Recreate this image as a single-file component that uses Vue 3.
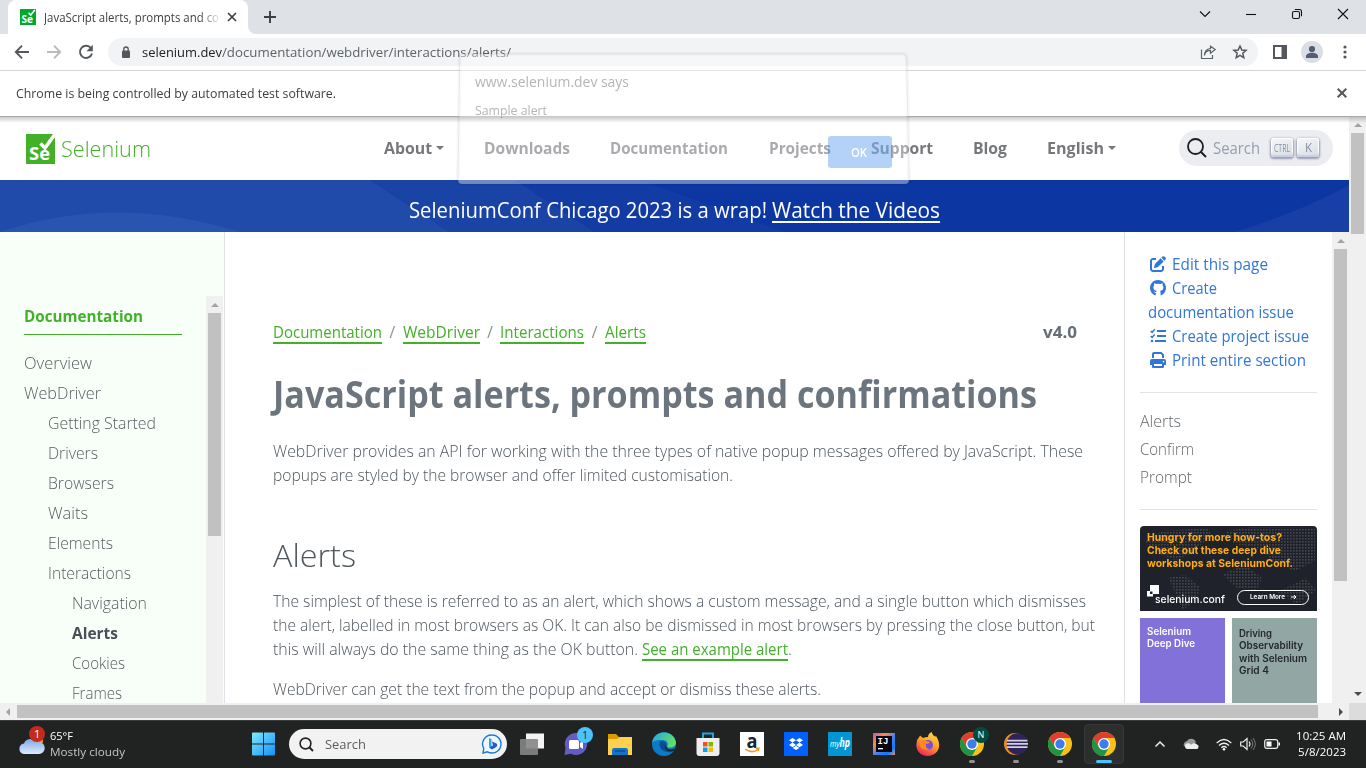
<script setup>
// Condenses a single line of text horizontally to a given width in pixels.
const vFit = {
  mounted(el, { value }) {
    const natural = el.getBoundingClientRect().width
    el.style.width = value + 'px'
    el.style.transform = `scaleX(${value / natural})`
  }
}

const nav = [
  { t: 'About', w: 48, caret: true },
  { t: 'Downloads', w: 86 },
  { t: 'Documentation', w: 118 },
  { t: 'Projects', w: 62 },
  { t: 'Support', w: 62 },
  { t: 'Blog', w: 34 },
  { t: 'English', w: 57, caret: true }
]
const side = [
  { t: 'Overview', w: 68, l: 0 },
  { t: 'WebDriver', w: 77, l: 0 },
  { t: 'Getting Started', w: 108, l: 1 },
  { t: 'Drivers', w: 50, l: 1 },
  { t: 'Browsers', w: 66, l: 1 },
  { t: 'Waits', w: 40, l: 1 },
  { t: 'Elements', w: 65, l: 1 },
  { t: 'Interactions', w: 83, l: 1 },
  { t: 'Navigation', w: 75, l: 2 },
  { t: 'Alerts', w: 46, l: 2, on: true },
  { t: 'Cookies', w: 53, l: 2 },
  { t: 'Frames', w: 50, l: 2 }
]
const crumbs = [
  { t: 'Documentation', w: 109 },
  { t: 'WebDriver', w: 77 },
  { t: 'Interactions', w: 84 },
  { t: 'Alerts', w: 41 }
]
const toc = [
  { t: 'Alerts', w: 41 },
  { t: 'Confirm', w: 54 },
  { t: 'Prompt', w: 52 }
]
</script>

<template>
  <div class="screen">
    <div class="tabstrip">
      <div class="tab">
        <svg width="16" height="16" viewBox="0 0 16 16"><rect width="16" height="16" fill="#00a82d"/><text x="1.500" y="14" font-size="10.500" font-weight="700" textLength="11.500" lengthAdjust="spacingAndGlyphs" fill="#fff">Se</text><path d="M8.500 3.700 10.700 6 15 .8" stroke="#fff" stroke-width="1.600" fill="none"/></svg>
        <div class="tabtitle"><span v-fit="175" class="fit">JavaScript alerts, prompts and co</span></div>
        <svg class="tabx" width="10" height="10" viewBox="0 0 10 10"><path d="M1 1l8 8M9 1l-8 8" stroke="#3c4043" stroke-width="1.700"/></svg>
      </div>
      <svg class="curve" width="8" height="8"><path d="M0 0A8 8 0 0 0 8 8H0z" fill="#fff"/></svg>
      <svg class="plus" width="12" height="12"><path d="M6 0v12M0 6h12" stroke="#3c4043" stroke-width="1.900"/></svg>
      <div class="wincontrols">
        <svg width="12" height="12" viewBox="0 0 12 12"><path d="M1 3.500l5 5 5-5"/></svg>
        <svg width="12" height="12" viewBox="0 0 12 12"><path d="M1 6.500h10"/></svg>
        <svg width="12" height="12" viewBox="0 0 12 12"><rect x="1.500" y="3.500" width="7" height="7" rx="1.500"/><path d="M3.800 1.500h4.700a2 2 0 0 1 2 2v4.700"/></svg>
        <svg width="12" height="12" viewBox="0 0 12 12"><path d="M1 1l10 10M11 1L1 11"/></svg>
      </div>
    </div>

    <div class="toolbar">
      <svg width="16" height="16" viewBox="0 0 16 16" class="ti"><path d="M15 8H2.500M8 1.700 1.800 8 8 14.300" stroke="#54575b" stroke-width="1.900" fill="none"/></svg>
      <svg width="16" height="16" viewBox="0 0 16 16" class="ti"><path d="M1 8h12.500M8 1.700 14.200 8 8 14.300" stroke="#b8babc" stroke-width="1.900" fill="none"/></svg>
      <svg width="16" height="16" viewBox="0 0 16 16" class="ti"><path d="M13 4.200A6.100 6.100 0 1 0 14 9.500" stroke="#54575b" stroke-width="1.900" fill="none"/><path d="M14.800.8v6.400H8.400z" fill="#54575b"/></svg>
      <div class="omnibox">
        <svg width="10" height="13" viewBox="0 0 10 13" class="lock"><rect x="1" y="4.500" width="8" height="7.500" rx="1" fill="#54575b"/><path d="M2.800 5V3.200a2.200 2.200 0 0 1 4.400 0V5" stroke="#54575b" stroke-width="1.300" fill="none"/></svg>
        <span v-fit="80" class="fit host">selenium.dev</span><span v-fit="289" class="fit path">/documentation/webdriver/interactions/alerts/</span>
        <svg class="share" width="17" height="15" viewBox="0 0 17 15"><path d="M1.500 4.500v9h11V10M4.500 10.500C4.800 7 7 5.600 10.500 5.400V8.200L15.200 4.500 10.500 1.200V3.500C6.500 4 4.500 6.500 4.500 10.500z" stroke="#5f6368" stroke-width="1.200" fill="none"/></svg>
        <svg class="star" width="16" height="16" viewBox="0 0 16 16"><path d="M8 2l1.800 4 4.300.4-3.300 2.900 1 4.300L8 11.300l-3.800 2.300 1-4.300L1.900 6.400 6.200 6z" stroke="#54575b" stroke-width="1.500" fill="none"/></svg>
      </div>
      <svg class="panel" width="14" height="14"><rect x="1" y="1" width="12" height="12" fill="none" stroke="#54575b" stroke-width="2"/><path d="M8.500 1H14v12H8.500z" fill="#54575b"/></svg>
      <svg class="avatar" width="22" height="22"><circle cx="11" cy="11" r="11" fill="#dadde4"/><circle cx="11" cy="8" r="3.100" fill="#515d73"/><path d="M5 17v-1.600c0-5 12-5 12 0V17z" fill="#515d73"/></svg>
      <svg class="dots" width="4" height="14"><circle cx="2" cy="2" r="1.600"/><circle cx="2" cy="7" r="1.600"/><circle cx="2" cy="12" r="1.600"/></svg>
    </div>

    <div class="infobar">
      <span v-fit="320" class="fit">Chrome is being controlled by automated test software.</span>
      <svg width="10" height="10" viewBox="0 0 10 10"><path d="M.7.7l8.600 8.600M9.300.7.7 9.300" stroke="#54575b" stroke-width="2"/></svg>
    </div>

    <div class="viewport">
      <div class="page">
        <header class="nav">
          <div class="brand">
            <svg width="30" height="30" viewBox="0 0 30 30"><path d="M0 0h26.500L29 4v26H0z" fill="#43b02a"/><path d="M14.500 9.500 19 14 28 1.500" stroke="#fff" stroke-width="3.500" fill="none"/><text x="3" y="26" font-size="18" font-weight="700" textLength="21" lengthAdjust="spacingAndGlyphs" fill="#fff">Se</text></svg>
            <span v-fit="90" class="fit">Selenium</span>
          </div>
          <nav>
            <a v-for="n in nav" :key="n.t"><span v-fit="n.w" class="fit">{{ n.t }}</span><i v-if="n.caret" class="caret"></i></a>
          </nav>
          <div class="search">
            <svg width="20" height="20" viewBox="0 0 20 20"><circle cx="8.500" cy="8.500" r="7.500" fill="none" stroke="#1c1e21" stroke-width="1.800"/><path d="M14 14l5 5" stroke="#1c1e21" stroke-width="1.900"/></svg>
            <span v-fit="47" class="fit">Search</span>
            <kbd><span v-fit="16" class="fit ctrl">CTRL</span></kbd><kbd><span v-fit="7" class="fit">K</span></kbd>
          </div>
        </header>
        <div class="banner">
          <svg class="waves" width="1349" height="52"><path d="M0 0H370L450 52H0z" fill="#204baa"/><path d="M370 0H515L595 52H450z" fill="#1944a5"/><path d="M515 0H640L785 52H595z" fill="#123ba3"/><path d="M0 52Q115 13 240 52z" fill="#2954b0"/><path d="M1235 52Q1300 32 1349 5V52z" fill="#173fa6"/></svg>
          <span v-fit="358" class="fit">SeleniumConf Chicago 2023 is a wrap!</span>
          <a><span v-fit="168" class="fit">Watch the Videos</span></a>
        </div>
        <div class="cols">
          <aside class="left">
            <div class="sidelist">
              <div class="sidehead"><span v-fit="119" class="fit">Documentation</span></div>
              <div v-for="s in side" :key="s.t" class="sideitem" :class="['l' + s.l, { on: s.on }]"><span v-fit="s.w" class="fit">{{ s.t }}</span></div>
            </div>
            <div class="vbar sidebar-scroll"><i class="up"></i><b></b></div>
          </aside>
          <main>
            <div class="crumbrow">
              <template v-for="(c, i) in crumbs" :key="c.t"><em v-if="i">/</em><a><span v-fit="c.w" class="fit">{{ c.t }}</span></a></template>
              <strong><span v-fit="34" class="fit">v4.0</span></strong>
            </div>
            <h1><span v-fit="764" class="fit">JavaScript alerts, prompts and confirmations</span></h1>
            <p><span v-fit="810" class="fit">WebDriver provides an API for working with the three types of native popup messages offered by JavaScript. These</span><br><span v-fit="460" class="fit">popups are styled by the browser and offer limited customisation.</span></p>
            <h2><span v-fit="83" class="fit">Alerts</span></h2>
            <p class="second"><span v-fit="813" class="fit">The simplest of these is referred to as an alert, which shows a custom message, and a single button which dismisses</span><br><span v-fit="822" class="fit">the alert, labelled in most browsers as OK. It can also be dismissed in most browsers by pressing the close button, but</span><br><span v-fit="365" class="fit">this will always do the same thing as the OK button.</span><a class="example"><span v-fit="146" class="fit">See an example alert</span></a>.</p>
            <p class="third"><span v-fit="548" class="fit">WebDriver can get the text from the popup and accept or dismiss these alerts.</span></p>
          </main>
          <aside class="right">
            <div class="meta">
              <div><svg viewBox="0 0 512 512"><path d="M471.600 21.700c-21.900-21.900-57.300-21.900-79.200 0L362.300 51.700l97.900 97.900 30.100-30.100c21.900-21.900 21.900-57.300 0-79.200L471.600 21.700zm-299.200 220c-6.100 6.100-10.800 13.600-13.500 21.900l-29.600 88.800c-2.900 8.600-.6 18.100 5.800 24.600s15.900 8.700 24.600 5.800l88.800-29.600c8.200-2.700 15.700-7.400 21.900-13.500L437.700 172.300 339.700 74.300 172.400 241.700zM96 64C43 64 0 107 0 160V416c0 53 43 96 96 96H352c53 0 96-43 96-96V320h-64v96c0 17.700-14.300 32-32 32H96c-17.700 0-32-14.300-32-32V160c0-17.700 14.300-32 32-32h96V64H96z"/></svg><span v-fit="96" class="fit">Edit this page</span></div>
              <div><svg viewBox="0 0 16 16"><path d="M5.400 15.500A8 8 0 1 1 10.600 15.500V12.500c0-.7-.2-1.300-.6-1.600 2-.3 3.400-1.100 3.400-3.600 0-.9-.3-1.600-.8-2.100.1-.3.300-1.100-.1-2 0 0-.7-.2-2.200.8a7 7 0 0 0-3.800 0C5 3 4.300 3.200 4.300 3.200c-.4.9-.2 1.700-.1 2-.5.500-.8 1.200-.8 2.100 0 2.500 1.500 3.300 3.400 3.600-.3.200-.5.600-.5 1.100-1.800.6-2-.9-2.600-1.200 .2.500.7 2.700 2.600 2.400z"/></svg><span v-fit="45" class="fit">Create</span></div>
              <div><span v-fit="146" class="fit">documentation issue</span></div>
              <div><svg viewBox="0 0 16 16"><path d="M.7 3l1.400 1.400L4.700 1.300M.7 8l1.400 1.400 2.600-3" fill="none" stroke="#3176d9" stroke-width="1.500"/><path d="M7 2h9v2H7zM7 7h9v2H7zM5 12h11v2H5z"/><circle cx="2" cy="13" r="1.300"/></svg><span v-fit="137" class="fit">Create project issue</span></div>
              <div><svg viewBox="0 0 16 16"><path d="M2 6V2a2 2 0 0 1 2-2h7.500L14 2.500V6h-2V3.300L10.700 2H4v4z"/><path fill-rule="evenodd" d="M2 7h12a2 2 0 0 1 2 2v3.500a.5.500 0 0 1-.5.500H14v2a1 1 0 0 1-1 1H3a1 1 0 0 1-1-1v-2H.5a.5.500 0 0 1-.5-.5V9a2 2 0 0 1 2-2zM4 12v2h8v-2zM13.500 8.700a.8.800 0 1 0 .01 0z"/></svg><span v-fit="134" class="fit">Print entire section</span></div>
            </div>
            <hr>
            <div class="toc"><div v-for="t in toc" :key="t.t"><span v-fit="t.w" class="fit">{{ t.t }}</span></div></div>
            <hr class="hr2">
            <div class="ad">
              <svg class="map" width="177" height="85"><defs><pattern id="dot" width="3" height="3" patternUnits="userSpaceOnUse"><rect width="1.600" height="1.600" fill="#44474e"/></pattern></defs><path d="M5 16 22 5 68 2 72 10 60 19 49 29 35 34 16 27zM28 52 45 49 60 61 56 73 43 84 36 68zM86 5 112 1 175 2 175 35 155 45 136 37 124 26 108 20 94 18zM82 48 105 39 122 52 117 64 97 62zM137 66 166 52 176 65 157 78z" fill="url(#dot)"/></svg>
              <div class="adtext"><span v-fit="135" class="fit">Hungry for more how-tos?</span><br><span v-fit="134" class="fit">Check out these deep dive</span><br><span v-fit="146" class="fit">workshops at SeleniumConf.</span></div>
              <div class="adfoot"><svg width="14" height="14"><path d="M3 0h9v9H3z" fill="#fff"/><path d="M0 6h6v5.500H0z" fill="#fff"/><path d="M3 6.500h2.500V9H3z" fill="#1c1e26"/></svg><span v-fit="70" class="fit conf">selenium.conf</span><div class="learn"><span v-fit="35" class="fit">Learn More</span><svg width="6" height="6"><path d="M0 3h5M3 1l2 2-2 2" stroke="#fff" fill="none"/></svg></div></div>
            </div>
            <div class="cards">
              <div class="purple"><span v-fit="44" class="fit">Selenium</span><br><span v-fit="48" class="fit">Deep Dive</span></div>
              <div class="teal"><span v-fit="33" class="fit">Driving</span><br><span v-fit="64" class="fit">Observability</span><br><span v-fit="68" class="fit">with Selenium</span><br><span v-fit="30" class="fit">Grid 4</span></div>
            </div>
          </aside>
          <div class="vbar inner-scroll"><i class="up"></i><b></b></div>
        </div>
      </div>
      <div class="vbar outer-scroll"><i class="up"></i><b></b><i class="down"></i></div>
      <div class="hbar"><i class="lf"></i><b></b><i class="rt"></i></div>
      <div class="corner"></div>
    </div>

    <div class="taskbar">
      <div class="weather">
        <svg width="30" height="32" viewBox="0 0 30 32"><defs><linearGradient id="cl" x2="0" y2="1"><stop stop-color="#7fa8e8"/><stop offset="1" stop-color="#dcecff"/></linearGradient></defs><circle cx="20" cy="15" r="5" fill="#f6a02a"/><path d="M6 28a5.300 5.300 0 0 1 0-10.500 7 7 0 0 1 12.500-1A6 6 0 1 1 20 28z" fill="url(#cl)"/><circle cx="19" cy="8" r="8" fill="#c42b1c"/><text x="16" y="12" font-size="11" fill="#fff">1</text></svg>
        <div><span v-fit="23" class="fit">65°F</span><br><span v-fit="75" class="fit cloudy">Mostly cloudy</span></div>
      </div>
      <svg class="start" width="24" height="24"><defs><linearGradient id="w" x2="1" y2="1"><stop stop-color="#7eeaff"/><stop offset="1" stop-color="#1590f5"/></linearGradient></defs><path d="M0 1.500Q0 .5 1 .5H11V11.500H0zM12 .5h10q1 0 1 1v10H12zM0 12.500h11v11H1q-1 0-1-1zM12 12.500h11v10q0 1-1 1H12z" fill="url(#w)"/></svg>
      <div class="tsearch">
        <svg width="15" height="15"><circle cx="6.500" cy="6.500" r="5.400" fill="none" stroke="#222" stroke-width="1.600"/><path d="M10.500 10.500 14 14" stroke="#222" stroke-width="1.900"/></svg>
        <span v-fit="41" class="fit">Search</span>
        <svg class="bing" width="20" height="20"><path d="M10 1a9 9 0 1 1-4.500 16.800L1 19l.8-4.500A9 9 0 0 1 10 1z" fill="#eef6ff" stroke="#1878d0" stroke-width="1.400"/><path d="M7 4l2.500 1v9L7 12.500z" fill="#2ba8e8"/><path d="M10 7.500l4.500 2q2 2-1 4L10 15.500 7 13.500l4-2z" fill="#2459ce"/></svg>
      </div>
      <div class="apps">
        <div><svg viewBox="0 0 24 24"><path d="M6 1.500h18v15H6z" fill="#f4f4f4"/><rect x="0" y="7" width="18" height="16" rx="1" fill="#858585" opacity=".9"/></svg></div>
        <div><svg viewBox="0 0 24 24"><path d="M12 1a11 11 0 1 1-5 20.700L.5 23 1.500 16A11 11 0 0 1 12 1z" fill="#625cc5"/><rect x="5" y="8" width="10" height="9" rx="1.500" fill="#fff"/><path d="M16 11l3-2v8l-3-2z" fill="#fff"/></svg><span class="badge">1</span></div>
        <div><svg viewBox="0 0 24 24"><path d="M0 2h8l3 3h13v8H0z" fill="#d99a05"/><path d="M0 7h9l3-2h12v18H0z" fill="#ffd04d"/><path d="M4 23v-5q0-2 2-2h12q2 0 2 2v5z" fill="#1173c9"/><path d="M7 18h10v2H7z" fill="#0d569a"/></svg></div>
        <div><svg viewBox="0 0 24 24"><defs><linearGradient id="e1" x1="0" x2="1" y2=".3"><stop stop-color="#20a6e7"/><stop offset="1" stop-color="#61df67"/></linearGradient></defs><circle cx="12" cy="12" r="12" fill="#0b7ac7"/><path d="M.2 10.500C2-3 22-3 24 10.500c0 4.500-5 6-9 4.500 2-3 .5-7-4.500-7C5 7.500 1 9 .2 10.500z" fill="url(#e1)"/><path d="M8 9.500C5.500 15 11 21.500 20 20q1-.5 1.500-1.500C16 19 11 17 14.500 13 14 10 11 8 8 9.500z" fill="#0c4b91"/><path d="M14.500 14.500c0 3 5 4 9 1.500l-1 2.500c-5 2-10 0-9.500-5z" fill="#202222"/></svg></div>
        <div><svg viewBox="0 0 24 24"><path d="M7 7V1.500h10V7" stroke="#1da6e5" stroke-width="2" fill="none"/><path d="M.5 6h23v15q0 3-3 3h-17q-3 0-3-3z" fill="#eee"/><path d="M7 10h4.500v4.500H7z" fill="#f25022"/><path d="M12.500 10H17v4.500h-4.500z" fill="#7fba00"/><path d="M7 15.500h4.500V20H7z" fill="#00a4ef"/><path d="M12.500 15.500H17V20h-4.500z" fill="#ffb900"/></svg></div>
        <div><svg viewBox="0 0 24 24"><path d="M0 0h24v24H0z" fill="#fff"/><text x="6.500" y="15.500" font-size="20" font-weight="700" textLength="11" lengthAdjust="spacingAndGlyphs" fill="#182334">a</text><path d="M5 17q7 5 13 .5M15.800 16.500l3-.3-.6 2.800" stroke="#f7981d" stroke-width="1.500" fill="none"/></svg></div>
        <div><svg viewBox="0 0 24 24"><path d="M0 0h24v24H0z" fill="#0061ff"/><path d="M8.500 6 12 8.300 8.500 10.600 5 8.300zM15.500 6 19 8.300l-3.500 2.300L12 8.300zM8.500 10.600 12 12.900l-3.500 2.300L5 12.900zM15.500 10.600l3.500 2.300-3.500 2.300L12 12.900zM12 13.700l3.400 2.200L12 18l-3.400-2.100z" fill="#fff"/></svg></div>
        <div><svg viewBox="0 0 24 24"><path d="M0 0h24v24H0z" fill="#0096d6"/><text x="2" y="14.500" font-size="8.500" font-style="italic" textLength="9.500" lengthAdjust="spacingAndGlyphs" fill="#fff">my</text><text x="11.500" y="15" font-size="12" font-style="italic" font-weight="700" textLength="10.500" lengthAdjust="spacingAndGlyphs" fill="#fff">hp</text></svg></div>
        <div><svg viewBox="0 0 24 24"><defs><linearGradient id="ij" x2="1" y2="1"><stop stop-color="#b857b4"/><stop offset=".3" stop-color="#fd8b4b"/><stop offset=".55" stop-color="#477ff5"/><stop offset=".8" stop-color="#087cfa"/><stop offset="1" stop-color="#ed8d78"/></linearGradient></defs><path d="M1 1h22v22H1z" fill="url(#ij)"/><path d="M4 4h16v16H4z" fill="#080410"/><text x="5.500" y="12" font-size="9" font-weight="700" class="mono" fill="#fff">IJ</text><path d="M6 16h5v1.300H6z" fill="#fff"/></svg></div>
        <div><svg viewBox="0 0 24 24"><defs><linearGradient id="ff" x1=".8" x2=".3" y2="1"><stop stop-color="#ffe141"/><stop offset=".5" stop-color="#ff9a28"/><stop offset="1" stop-color="#f0205d"/></linearGradient></defs><path d="M4 3.500 7 6q2-1 5-1Q12 2 15.500 0q1 3.500 4 5 0-1 .2-1.600C27 14 22 23 12 24 4 24-1 18 .7 10 1 7 3 6 4 3.500z" fill="url(#ff)"/><circle cx="12" cy="13" r="5" fill="#7a4edb"/><path d="M3 9q5-2 7 0l4 1q-1 2-4 2-1 5 4 5-6 3-10-3z" fill="#ff8a20"/></svg></div>
        <div><svg viewBox="0 0 24 24"><g id="chrome"><circle cx="12" cy="12" r="12" fill="#fbc116"/><path d="M12 12V6h10.400A12 12 0 0 0 1.600 6L6.800 15z" fill="#e33b2e"/><path d="M1.600 6A12 12 0 0 0 12 24l5.200-9L12 17.500 6.800 15z" fill="#229342"/><circle cx="12" cy="12" r="6" fill="#fff"/><circle cx="12" cy="12" r="4.700" fill="#3b7ded"/></g></svg><span class="badge n">N</span><u></u></div>
        <div><svg viewBox="0 0 24 24"><circle cx="11" cy="12" r="11" fill="#ee8b25"/><circle cx="13.300" cy="12" r="10.700" fill="#2e2459"/><path d="M3 7.800h20.500v1.800H3zM2.500 11H24v1.800H2.500zM3 14.200h20.500V16H3z" fill="#d4d0e2"/></svg><u></u></div>
        <div><svg viewBox="0 0 24 24"><use href="#chrome"/></svg><u></u></div>
        <div class="active"><svg viewBox="0 0 24 24"><use href="#chrome"/></svg><u></u></div>
      </div>
      <div class="tray">
        <svg width="12" height="8"><path d="M1.500 6.500 6 2l4.500 4.500" stroke="#eee" stroke-width="1.500" fill="none"/></svg>
        <svg width="17" height="12"><path d="M1 8.500A4 4 0 0 1 4 3a5 5 0 0 1 9 1.500z" fill="#999"/><path d="M4 11a3 3 0 0 1-.5-5.500Q6 4.500 8 6.500 11 3.500 14 6.500a2.400 2.400 0 0 1 0 4.500z" fill="#eee"/></svg>
        <svg width="16" height="13" viewBox="0 0 16 13"><path d="M.7 5q7.300-7 14.600 0M3 7.500q5-4.500 10 0M5.300 9.800q2.700-2.500 5.400 0" stroke="#eee" stroke-width="1.300" fill="none"/><circle cx="8" cy="11.300" r="1.300" fill="#fff"/></svg>
        <svg width="16" height="14" viewBox="0 0 16 14"><path d="M.7 5h2.500L7 1.500v11L3.200 9H.7zM9 4.500q2 2.500 0 5" stroke="#eee" stroke-width="1.200" fill="none"/><path d="M11 2.500q3.500 4.500 0 9M13 1q4.500 6 0 12" stroke="#777" fill="none"/></svg>
        <svg width="17" height="10"><rect x=".7" y=".7" width="13" height="8.600" rx="2" fill="none" stroke="#eee" stroke-width="1.200"/><path d="M2.500 2.500h5v5h-5zM14.500 3.500H16v3h-1.500z" fill="#fff"/></svg>
      </div>
      <div class="clock"><span v-fit="50" class="fit">10:25 AM</span><br><span v-fit="48" class="fit">5/8/2023</span></div>
    </div>

    <div class="alert">
      <svg class="sheet" width="461" height="140" viewBox="-5 -5 461 140"><path d="M5.500 0H444.500Q448.500 0 448.600 4L451 126Q451 130 447 130H4Q0 130 0 126L1.800 4Q1.800 0 5.500 0z" fill="none" stroke="#000" stroke-width="4" stroke-opacity=".03"/><path d="M5.500 0H444.500Q448.500 0 448.600 4L451 126Q451 130 447 130H4Q0 130 0 126L1.800 4Q1.800 0 5.500 0z" fill="#fff" fill-opacity=".38" stroke="#000" stroke-opacity=".06"/></svg>
      <div class="atitle"><span v-fit="154" class="fit">www.selenium.dev says</span></div>
      <div class="amsg"><span v-fit="72" class="fit">Sample alert</span></div>
      <button><span v-fit="16" class="fit">OK</span></button>
    </div>
  </div>
</template>

<style>
html, body { overflow: hidden; }
</style>

<style scoped>
* { box-sizing: border-box; }
.screen { position: relative; width: 1366px; height: 768px; display: flex; flex-direction: column; overflow: hidden; background: #fff; font-family: "Open Sans", "Noto Sans", sans-serif; color: #6c757d; }
.screen svg { display: block; flex: none; overflow: visible; }
.fit { display: inline-block; white-space: nowrap; transform-origin: 0 50%; }
.mono { font-family: "Liberation Mono", monospace; }

.tabstrip { height: 34px; flex: none; background: #dee1e6; display: flex; align-items: center; padding-left: 8px; }
.tab { width: 240px; height: 34px; background: #fff; border-radius: 8px 8px 0 0; display: flex; align-items: center; padding-left: 12px; font-size: 12px; color: #3c4043; }
.tabtitle { width: 175px; margin-left: 8px; -webkit-mask-image: linear-gradient(90deg, #000 155px, transparent 178px); }
.tabx { margin-left: 8px; }
.curve { align-self: flex-end; }
.plus { margin-left: 8px; }
.wincontrols { margin-left: auto; margin-right: 17px; margin-top: -6px; display: flex; gap: 34px; }
.wincontrols path, .wincontrols rect { fill: none; stroke: #111; stroke-width: 1.1; }
.toolbar { height: 37px; flex: none; display: flex; align-items: center; padding-left: 14px; border-bottom: 1px solid #d3d5d7; }
.ti { margin-right: 16px; }
.omnibox { width: 1150px; height: 28px; margin-left: -2px; border-radius: 14px; background: #f1f3f4; display: flex; align-items: center; font-size: 13.3px; padding-left: 13px; }
.lock { margin-right: 11px; }
.host { color: #202124; }
.path { color: #5f6368; }
.share { margin-left: auto; margin-right: 15px; }
.star { margin-right: 10px; }
.panel { margin-left: 15px; }
.avatar { margin-left: 14px; }
.dots { margin-left: 20px; fill: #54575b; }
.infobar { height: 45px; flex: none; padding: 0 19px 2px 16px; display: flex; align-items: center; justify-content: space-between; font-size: 13px; color: #3c4043; }

.viewport { height: 604px; flex: none; border-top: 1px solid #a7a9aa; display: grid; grid-template: 586px 17px / 1349px 17px; position: relative; }
.viewport::before { content: ""; position: absolute; left: 0; right: 0; top: 0; height: 6px; background: linear-gradient(#0003, #0000); z-index: 2; }
.page { overflow: hidden; display: flex; flex-direction: column; }
.nav { height: 63px; flex: none; display: flex; align-items: center; padding-bottom: 2px; }
.brand { width: 359px; padding-left: 26px; margin-right: -1px; display: flex; align-items: center; gap: 5px; color: #43b02a; font-size: 22px; font-weight: 300; padding-top: 2px; }
.brand .fit { margin-top: -1px; }
.nav nav { display: flex; gap: 40px; margin-left: 26px; font-size: 16px; font-weight: 700; color: #75777b; }
.nav nav a { display: flex; align-items: center; }
.nav nav a:nth-child(n+4) { position: relative; left: 1px; }
.caret { border: 4px solid transparent; border-top-color: currentColor; border-bottom: 0; margin-left: 4px; }
.search { margin-left: auto; margin-right: 16px; width: 154px; height: 36px; border-radius: 18px; background: #ebedf0; display: flex; align-items: center; padding-left: 8px; font-size: 16px; color: #969faf; }
.search > .fit { margin: 0 11px 0 6px; font-size: 16.5px; }
kbd { width: 22px; height: 19px; margin-right: 4px; border-radius: 3px; background: linear-gradient(-26deg, #d5dbe4, #f8f8f8); box-shadow: inset 0 -2px 0 #cdcde6, inset 0 0 1px 1px #fff, 0 1px 2px 1px #1e235a66; display: flex; align-items: center; justify-content: center; font: 400 12px "Open Sans", sans-serif; color: #868fa3; }
kbd .ctrl { font-size: 10px; }
.banner { height: 52px; flex: none; position: relative; background: #0c37a3; color: #fff; display: flex; align-items: center; justify-content: center; gap: 5px; font-size: 22px; padding-top: 7px; padding-right: 1px; }
.banner .waves { position: absolute; inset: 0; }
.banner > .fit, .banner a { position: relative; line-height: 26px; }
.banner > .fit { margin-top: -2px; }
.banner a { border-bottom: 2px solid #fff; height: 26px; display: flex; line-height: 24px; }
.cols { height: 471px; display: grid; grid-template-columns: 225px 899px 208px 17px; }
.left { background: #f8fff9; border-right: 1px solid #dee2e6; display: flex; justify-content: space-between; }
.sidelist { width: 182px; padding: 72px 0 0 24px; color: #565e63; font-weight: 400; }
.sidehead { height: 31px; line-height: 24px; margin-bottom: 13px; border-bottom: 1px solid #43b02a; color: #43b02a; font-weight: 700; }
.sideitem { height: 30px; line-height: 30px; font-weight: 300; }
.sideitem.l1 { padding-left: 24px; }
.sideitem.l2 { padding-left: 48px; }
.sideitem.on { font-weight: 700; color: #494f57; }
.left, main, .right { font-size: 16px; }
.vbar { width: 17px; background: #f0f0f0; display: flex; flex-direction: column; align-items: center; }
.vbar b { width: 13px; background: #c1c1c1; }
.up { border: 4px solid transparent; border-bottom-color: #a3a3a3; border-top: 0; margin: 7px 0 6px; }
.down { border: 4px solid transparent; border-top-color: #4d4d4d; border-bottom: 0; margin-top: auto; margin-bottom: 7px; }
.sidebar-scroll { margin: 64px 1px 0 0; }
.sidebar-scroll b { height: 223px; }
.inner-scroll b { height: 332px; }
.outer-scroll .up { margin-top: 6px; }
.outer-scroll b { height: 101px; }
.hbar { background: #f0f0f0; display: flex; align-items: center; justify-content: space-between; }
.hbar b { width: 1301px; height: 13px; background: #c1c1c1; margin-right: auto; }
.lf { border: 4px solid transparent; border-right-color: #a3a3a3; border-left: 0; margin: 0 7px 0 6px; }
.rt { border: 4px solid transparent; border-left-color: #4d4d4d; border-right: 0; margin-right: 6px; }
.corner { background: #dcdcdc; }

main { padding: 88px 28px 0 48px; line-height: 24px; font-weight: 300; color: #4e565e; white-space: nowrap; }
main .fit { vertical-align: top; }
.crumbrow { display: flex; height: 24px; line-height: 24px; }
.crumbrow a, .example { color: #43b02a; border-bottom: 2px solid #43b02a; font-weight: 400; height: 24px; }
.crumbrow em { font-style: normal; width: 20.6px; text-align: center; }
.crumbrow strong { margin-left: auto; margin-right: 19px; font-weight: 700; color: #656d75; }
h1 { margin: 25px 0 22px; font-size: 38px; line-height: 48px; font-weight: 700; color: #6c757d; }
p { margin: 0; }
h2 { margin: 49px 0 15px; font-size: 32px; line-height: 38px; font-weight: 300; }
.example { display: inline-block; line-height: 24px; margin-left: 4px; vertical-align: top; }
.third { margin-top: 16px; }

.right { border-left: 1px solid #dee2e6; padding: 20px 15px 0; font-weight: 300; overflow: hidden; }
.meta { padding-left: 8px; color: #3176d9; font-weight: 400; }
.meta div { height: 24px; line-height: 24px; display: flex; align-items: center; }
.meta svg { width: 16px; height: 16px; margin: 0 6px 0 2px; fill: #3176d9; }
hr { border: 0; border-top: 1px solid #e2e3e5; margin: 20px 0 14px; }
.toc { line-height: 28px; height: 84px; color: #64686c; }
.hr2 { margin: 18px 0 16px; }
.ad { height: 85px; border-radius: 4px 4px 0 0; background: #1f222a; padding: 5px 7px; position: relative; font-family: Inter, sans-serif; }
.map { position: absolute; left: 0; top: 0; }
.adtext { position: relative; font-size: 11px; font-weight: 700; line-height: 13.2px; color: #ffad0f; }
.adtext .fit, .cards .fit { vertical-align: top; }
.adfoot { position: relative; display: flex; height: 24px; margin-top: 14px; color: #fff; }
.conf { font-size: 11px; font-weight: 500; margin-left: -6px; line-height: 29px; }
.learn { margin-left: 12px; margin-top: 5px; width: 72px; height: 15px; border: 1px solid #fff; border-radius: 8px; display: flex; align-items: center; justify-content: center; gap: 6px; font-size: 6.5px; font-weight: 600; }
.cards { margin-top: 7px; display: flex; gap: 7px; font: 600 10px/12.4px Inter, sans-serif; }
.cards > div { width: 85px; height: 86px; padding: 7px; }
.purple { background: #8271d9; color: #fff; }
.cards .teal { background: #92a6a4; color: #23282e; padding-top: 9px; }

.taskbar { height: 48px; flex: none; background: #212222; border-top: 1px solid #393c3c; display: flex; align-items: center; color: #fff; font-size: 11.5px; position: relative; padding-bottom: 1px; }
.weather { display: flex; gap: 2px; width: 252px; padding-left: 18px; line-height: 16px; align-items: center; }
.weather > svg { margin-top: -4px; }
.cloudy { color: #c5c5c5; }
.tsearch { margin-left: 13px; width: 218px; height: 30px; border-radius: 15px; background: #f2f2f2; color: #5c5c5c; display: flex; align-items: center; padding: 0 5px 0 10px; font-size: 12.5px; }
.tsearch .fit { margin-left: 11px; }
.bing { margin-left: auto; }
.apps { display: flex; margin-left: 3px; }
.apps > div { width: 44px; height: 47px; display: flex; align-items: center; justify-content: center; position: relative; }
.apps svg { width: 24px; height: 24px; }
.apps > .active::before { content: ""; position: absolute; inset: 3px 2px 4px; border: 1px solid #353636; background: #2d2e2e; border-radius: 4px; }
.active svg { position: relative; }
u { position: absolute; left: 19px; bottom: 5px; width: 6px; height: 3px; border-radius: 2px; background: #929292; }
.active u { left: 14px; width: 16px; background: #4cc2ff; }
.badge { position: absolute; left: 23px; top: 6px; width: 16px; height: 16px; border-radius: 8px; background: #4cc2ff; color: #222; font-size: 10px; line-height: 16px; text-align: center; }
.badge.n { background: #004d40; color: #fff; left: 23px; font-size: 9px; }
.tray { display: flex; align-items: center; margin-left: 28px; }
.tray svg:nth-child(2) { margin-left: 17px; }
.tray svg:nth-child(3) { margin-left: 16px; }
.tray svg:nth-child(4) { margin-left: 8px; }
.tray svg:nth-child(5) { margin-left: 8px; }
.clock { margin-left: auto; margin-right: 20px; text-align: right; line-height: 16px; }

.alert { position: absolute; left: 458px; top: 54px; width: 451px; height: 130px; }
.sheet { position: absolute; left: -5px; top: -5px; }
.alert > div { position: absolute; left: 17px; white-space: nowrap; color: #b4b5b6; }
.atitle { top: 17px; font-size: 15px; line-height: 21px; }
.amsg { top: 47px; font-size: 12.5px; line-height: 20px; }
.alert button { position: absolute; left: 370px; top: 82px; width: 64px; height: 32px; border: 0; border-radius: 3px; background: #1a73e854; color: #fff; font: 600 12px "Open Sans", sans-serif; padding: 0 2px 0 0; }
</style>
